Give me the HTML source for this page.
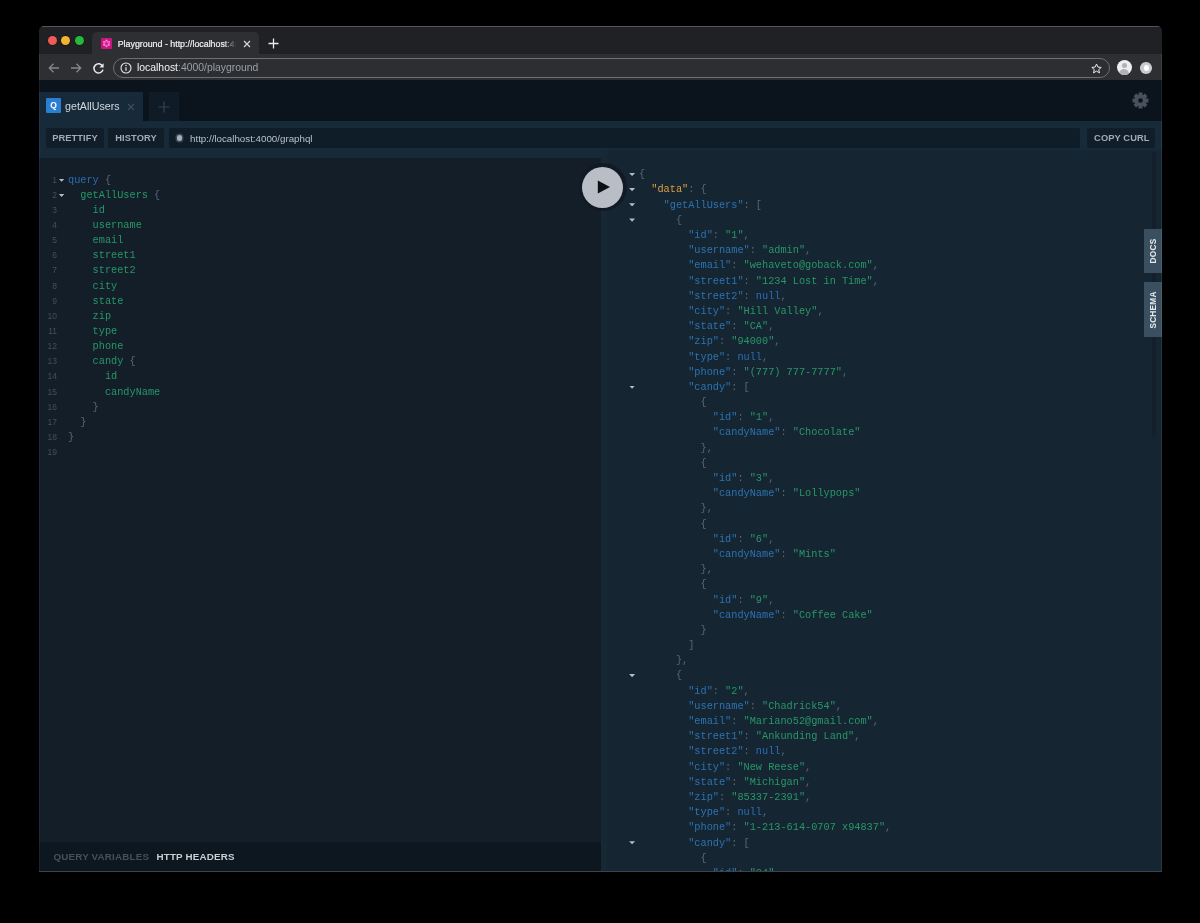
<!DOCTYPE html>
<html lang="en">
<head>
<meta charset="utf-8">
<title>Playground</title>
<style>
*{box-sizing:border-box;margin:0;padding:0}
html,body{width:1200px;height:923px;background:#000;overflow:hidden}
body{position:relative;font-family:"Liberation Sans",sans-serif;-webkit-font-smoothing:antialiased}
.abs{position:absolute}
#win{will-change:transform;position:absolute;left:39px;top:26px;width:1123px;height:846px;background:#131e29;border-radius:5px 5px 0 0;overflow:hidden}
/* chrome */
#titlebar{position:absolute;left:0;top:0;width:100%;height:29px;background:#202124;border-top:1px solid #55575a}
#ctool{position:absolute;left:0;top:28px;width:100%;height:26px;background:#2d2f33}
.tl{position:absolute;top:9.1px;width:9px;height:9px;border-radius:50%;box-shadow:0 0 0 0.8px rgba(0,0,0,.28)}
#ctab{position:absolute;left:53px;top:5px;width:167px;height:25px;background:#2d2f33;border-radius:5px 5px 0 0}
#fav{position:absolute;left:9.2px;top:6px;width:10.8px;height:10.6px;background:#c9157f;border-radius:1px}
#ctabt{position:absolute;left:25.7px;top:4.8px;width:120.3px;-webkit-text-stroke:0.2px #e8eaed;height:14px;font-size:8.85px;line-height:14px;color:#f4f5f6;white-space:nowrap;overflow:hidden}
#ctabfade{position:absolute;left:132px;top:3px;width:15px;height:18px;background:linear-gradient(90deg,rgba(45,47,51,0),#2d2f33 80%)}
#pill{position:absolute;left:74px;top:32px;width:997px;height:20px;border-radius:10px;background:#2c2e32;border:1.4px solid #6c6f73}
#urlt{position:absolute;left:98px;top:35px;font-size:10.4px;line-height:14px;color:#9aa0a6;white-space:nowrap}
#urlt b{color:#f1f3f4;font-weight:normal}
/* playground */
#pg{position:absolute;left:0;top:54px;width:100%;height:792px;background:#0b141c}
#tab1{position:absolute;left:0;top:12px;width:104px;height:29px;background:#172a3a}
#tab2{position:absolute;left:110px;top:12px;width:30px;height:29px;background:#0f1b26}
#qic{position:absolute;left:7px;top:6px;width:15px;height:15px;background:#2a7ed3;color:#fff;font-size:8.5px;line-height:15px;text-align:center;font-weight:bold;border-radius:1px}
#tabt{position:absolute;left:26px;top:6px;font-size:10.7px;line-height:16px;color:#d3d8dc;white-space:nowrap}
#bar{position:absolute;left:0;top:41px;width:100%;height:37px;background:#172a3a}
.btn{position:absolute;top:6.7px;height:20.6px;overflow:hidden;background:#111e2a;border-radius:2px;color:#a3abb3;font-weight:bold;font-size:9.3px;line-height:21.8px;text-align:center;white-space:nowrap;letter-spacing:0.1px}
#urlin{position:absolute;left:130px;top:6.7px;width:911px;height:20.6px;background:#0f1d29;border-radius:2px}
#urlin span{position:absolute;left:21px;top:0;font-size:9.75px;line-height:21.6px;color:#b9c0c6;white-space:nowrap}
#urlin i{position:absolute;left:7.8px;top:7.8px;width:5.5px;height:5.5px;border-radius:50%;background:#a9b0b7;box-shadow:0 0 0 1.5px rgba(169,176,183,.28)}
#lpane{position:absolute;left:0;top:78px;width:562px;height:714px;background:#131e29}
#rpane{position:absolute;left:562px;top:70px;width:561px;height:722px;background:#162532;border-left:6px solid #172835}
#bbar{position:absolute;left:0;top:684px;width:562px;height:30px;background:#0d1720}
#bbar span{position:absolute;top:8px;font-weight:bold;font-size:9.8px;letter-spacing:0.18px;line-height:14px;white-space:nowrap}
.ln{position:relative;height:15.15px;line-height:15.15px;font-family:"Liberation Mono",monospace;font-size:10.25px;white-space:pre}
.ln .code{position:absolute;top:0}
#lcode{position:absolute;left:0;top:14.6px;width:100%}
#lcode .code{margin-left:29px}
#lcode .num{position:absolute;left:0;top:0;width:18px;text-align:right;color:#434f5a;font-family:"Liberation Sans",sans-serif;font-size:8.5px}
#lcode .fold{position:absolute;left:19.9px;top:6.3px;width:5.4px;height:2.9px}
.fold{width:6px;height:3.2px;background:#b4bcc4;clip-path:polygon(0 0,100% 0,50% 100%);display:block}
#rcode{position:absolute;left:-6px;top:17.3px;width:100%}
#rcode .ln{height:15.19px;line-height:15.19px}
#rcode .code{margin-left:38px}
#rcode .fold{position:absolute;left:28.1px;top:5.6px}
.kw{color:#2a6db4}
.prop{color:#279767}
.p{color:#5a6672}
.key{color:#2c73b1}
.str{color:#279767}
.data{color:#dba045}
#play{position:absolute;left:539.7px;top:83.2px;width:48px;height:48px;border-radius:50%;background:#111a24}
#play i{position:absolute;left:3.5px;top:3.5px;width:41px;height:41px;border-radius:50%;background:#b9bec6}
.side{position:absolute;left:1105px;width:18px;background:#3a5060}
.side span{position:absolute;left:50%;top:50%;transform:translate(-50%,-50%) rotate(-90deg);color:#e6eaed;font-size:8.3px;font-weight:bold;white-space:nowrap;letter-spacing:0.2px}
#sbar{position:absolute;left:1113px;top:72px;width:4px;height:287px;background:linear-gradient(180deg,#13202b 0,#13202b 97.5%,rgba(19,32,43,0) 100%)}
</style>
</head>
<body>
<div id="win">
  <div id="titlebar">
    <div class="tl" style="left:8.6px;background:#ee5c54"></div>
    <div class="tl" style="left:22.3px;background:#f5b32f"></div>
    <div class="tl" style="left:35.9px;background:#27b93c"></div>
    <div id="ctab">
      <div id="fav"><svg style="display:block" width="11" height="11" viewBox="0 0 11 11"><path d="M5.5 2.4 L8.1 3.9 L8.1 7 L5.5 8.5 L2.9 7 L2.9 3.9 Z M5.5 2.4 L8.1 7 L2.9 7 Z" fill="none" stroke="#ff7fd3" stroke-width="0.7"/><g fill="#ff8dd8"><circle cx="5.5" cy="2.4" r="0.8"/><circle cx="8.1" cy="3.9" r="0.8"/><circle cx="8.1" cy="7" r="0.8"/><circle cx="5.5" cy="8.5" r="0.8"/><circle cx="2.9" cy="7" r="0.8"/><circle cx="2.9" cy="3.9" r="0.8"/></g></svg></div>
      <div id="ctabt">Playground - http://localhost:4000/playground</div>
      <div id="ctabfade"></div>
      <svg class="abs" style="left:151px;top:8px" width="8" height="8" viewBox="0 0 8 8"><path d="M1 1 L7 7 M7 1 L1 7" stroke="#d5d7da" stroke-width="1.2"/></svg>
    </div>
    <svg class="abs" style="left:229px;top:11px" width="11" height="11" viewBox="0 0 11 11"><path d="M5.5 0.5 V10.5 M0.5 5.5 H10.5" stroke="#e8eaed" stroke-width="1.3"/></svg>
  </div>
  <div id="ctool"></div>
  <svg class="abs" style="left:9px;top:36px" width="12" height="12" viewBox="0 0 12 12"><path d="M11 6 H1.5 M5.5 1.8 L1.3 6 L5.5 10.2" fill="none" stroke="#84888d" stroke-width="1.3"/></svg>
  <svg class="abs" style="left:31px;top:36px" width="12" height="12" viewBox="0 0 12 12"><path d="M1 6 H10.5 M6.5 1.8 L10.7 6 L6.5 10.2" fill="none" stroke="#84888d" stroke-width="1.3"/></svg>
  <svg class="abs" style="left:53px;top:35.5px" width="13" height="13" viewBox="0 0 13 13"><path d="M10.6 4.2 A4.6 4.6 0 1 0 11 7.6" fill="none" stroke="#e8eaed" stroke-width="1.5"/><path d="M11.6 1.2 V5.4 H7.4 Z" fill="#e8eaed"/></svg>
  <div id="pill"></div>
  <svg class="abs" style="left:80.5px;top:36px" width="12" height="12" viewBox="0 0 12 12"><circle cx="6" cy="6" r="5" fill="none" stroke="#e8eaed" stroke-width="1.1"/><path d="M6 5.2 V8.8" stroke="#e8eaed" stroke-width="1.2"/><circle cx="6" cy="3.5" r="0.75" fill="#e8eaed"/></svg>
  <div id="urlt"><b>localhost</b>:4000/playground</div>
  <svg class="abs" style="left:1052px;top:36.5px" width="11" height="11" viewBox="0 0 11 11"><path d="M5.5 1 L6.9 4.1 L10.2 4.4 L7.7 6.6 L8.5 9.9 L5.5 8.1 L2.5 9.9 L3.3 6.6 L0.8 4.4 L4.1 4.1 Z" fill="none" stroke="#e8eaed" stroke-width="1"/></svg>
  <div class="abs" style="left:1077.6px;top:34.2px;width:15px;height:15px;border-radius:50%;background:#eceef0;overflow:hidden"><div class="abs" style="left:5px;top:2.5px;width:5px;height:5px;border-radius:50%;background:#aeb2b7"></div><div class="abs" style="left:2.5px;top:8.5px;width:10px;height:8px;border-radius:5px 5px 0 0;background:#aeb2b7"></div></div>
  <div class="abs" style="left:1101px;top:36px;width:11.6px;height:11.6px;border-radius:50%;background:#c9cccf"><div class="abs" style="left:3.5px;top:3px;width:5px;height:6px;border-radius:50% 50% 40% 40%;background:#fff"></div></div>

  <div id="pg">
    <div id="tab1"><div id="qic">Q</div><div id="tabt">getAllUsers</div>
      <svg class="abs" style="left:88px;top:10.5px" width="8" height="8" viewBox="0 0 8 8"><path d="M1 1 L7 7 M7 1 L1 7" stroke="#3f4f5d" stroke-width="1.1"/></svg>
    </div>
    <div id="tab2"><svg class="abs" style="left:9px;top:8.5px" width="12" height="12" viewBox="0 0 12 12"><path d="M6 0.5 V11.5 M0.5 6 H11.5" stroke="#36434f" stroke-width="1.2"/></svg></div>
    <svg class="abs" style="left:1092.5px;top:12px" width="17" height="17" viewBox="-8.5 -8.5 17 17"><g fill="#48525f"><circle r="6"/><g id="t"><rect x="-2" y="-8" width="4" height="16" rx="0.5"/></g><use href="#t" transform="rotate(45)"/><use href="#t" transform="rotate(90)"/><use href="#t" transform="rotate(135)"/></g><circle r="2.3" fill="#0b141c"/></svg>
    <div id="bar">
      <div class="btn" style="left:7px;width:58px">PRETTIFY</div>
      <div class="btn" style="left:69px;width:56px">HISTORY</div>
      <div id="urlin"><i></i><span>http://localhost:4000/graphql</span></div>
      <div class="btn" style="left:1048px;width:67.5px;padding-left:2.2px">COPY CURL</div>
    </div>
    <div id="lpane">
      <div id="lcode">
<div class="ln"><span class="num">1</span><i class="fold"></i><span class="code" style="left:0.00px"><span class="kw">query</span><span class="p"> {</span></span></div>
<div class="ln"><span class="num">2</span><i class="fold"></i><span class="code" style="left:12.30px"><span class="prop">getAllUsers</span><span class="p"> {</span></span></div>
<div class="ln"><span class="num">3</span><span class="code" style="left:24.60px"><span class="prop">id</span></span></div>
<div class="ln"><span class="num">4</span><span class="code" style="left:24.60px"><span class="prop">username</span></span></div>
<div class="ln"><span class="num">5</span><span class="code" style="left:24.60px"><span class="prop">email</span></span></div>
<div class="ln"><span class="num">6</span><span class="code" style="left:24.60px"><span class="prop">street1</span></span></div>
<div class="ln"><span class="num">7</span><span class="code" style="left:24.60px"><span class="prop">street2</span></span></div>
<div class="ln"><span class="num">8</span><span class="code" style="left:24.60px"><span class="prop">city</span></span></div>
<div class="ln"><span class="num">9</span><span class="code" style="left:24.60px"><span class="prop">state</span></span></div>
<div class="ln"><span class="num">10</span><span class="code" style="left:24.60px"><span class="prop">zip</span></span></div>
<div class="ln"><span class="num">11</span><span class="code" style="left:24.60px"><span class="prop">type</span></span></div>
<div class="ln"><span class="num">12</span><span class="code" style="left:24.60px"><span class="prop">phone</span></span></div>
<div class="ln"><span class="num">13</span><span class="code" style="left:24.60px"><span class="prop">candy</span><span class="p"> {</span></span></div>
<div class="ln"><span class="num">14</span><span class="code" style="left:36.90px"><span class="prop">id</span></span></div>
<div class="ln"><span class="num">15</span><span class="code" style="left:36.90px"><span class="prop">candyName</span></span></div>
<div class="ln"><span class="num">16</span><span class="code" style="left:24.60px"><span class="p">}</span></span></div>
<div class="ln"><span class="num">17</span><span class="code" style="left:12.30px"><span class="p">}</span></span></div>
<div class="ln"><span class="num">18</span><span class="code" style="left:0.00px"><span class="p">}</span></span></div>
<div class="ln"><span class="num">19</span><span class="code" style="left:0.00px"></span></div>

      </div>
      <div id="bbar"><span style="left:14.5px;color:#46505b">QUERY VARIABLES</span><span style="left:117.5px;color:#c9cfd4">HTTP HEADERS</span></div>
    </div>
    <div id="rpane">
      <div id="rcode">
<div class="ln"><i class="fold"></i><span class="code" style="left:0.00px"><span class="p">{</span></span></div>
<div class="ln"><i class="fold"></i><span class="code" style="left:12.30px"><span class="data">&quot;data&quot;</span><span class="p">: {</span></span></div>
<div class="ln"><i class="fold"></i><span class="code" style="left:24.60px"><span class="key">&quot;getAllUsers&quot;</span><span class="p">: [</span></span></div>
<div class="ln"><i class="fold"></i><span class="code" style="left:36.90px"><span class="p">{</span></span></div>
<div class="ln"><span class="code" style="left:49.20px"><span class="key">&quot;id&quot;</span><span class="p">: </span><span class="str">&quot;1&quot;</span><span class="p">,</span></span></div>
<div class="ln"><span class="code" style="left:49.20px"><span class="key">&quot;username&quot;</span><span class="p">: </span><span class="str">&quot;admin&quot;</span><span class="p">,</span></span></div>
<div class="ln"><span class="code" style="left:49.20px"><span class="key">&quot;email&quot;</span><span class="p">: </span><span class="str">&quot;wehaveto@goback.com&quot;</span><span class="p">,</span></span></div>
<div class="ln"><span class="code" style="left:49.20px"><span class="key">&quot;street1&quot;</span><span class="p">: </span><span class="str">&quot;1234 Lost in Time&quot;</span><span class="p">,</span></span></div>
<div class="ln"><span class="code" style="left:49.20px"><span class="key">&quot;street2&quot;</span><span class="p">: </span><span class="kw">null</span><span class="p">,</span></span></div>
<div class="ln"><span class="code" style="left:49.20px"><span class="key">&quot;city&quot;</span><span class="p">: </span><span class="str">&quot;Hill Valley&quot;</span><span class="p">,</span></span></div>
<div class="ln"><span class="code" style="left:49.20px"><span class="key">&quot;state&quot;</span><span class="p">: </span><span class="str">&quot;CA&quot;</span><span class="p">,</span></span></div>
<div class="ln"><span class="code" style="left:49.20px"><span class="key">&quot;zip&quot;</span><span class="p">: </span><span class="str">&quot;94000&quot;</span><span class="p">,</span></span></div>
<div class="ln"><span class="code" style="left:49.20px"><span class="key">&quot;type&quot;</span><span class="p">: </span><span class="kw">null</span><span class="p">,</span></span></div>
<div class="ln"><span class="code" style="left:49.20px"><span class="key">&quot;phone&quot;</span><span class="p">: </span><span class="str">&quot;(777) 777-7777&quot;</span><span class="p">,</span></span></div>
<div class="ln"><i class="fold"></i><span class="code" style="left:49.20px"><span class="key">&quot;candy&quot;</span><span class="p">: [</span></span></div>
<div class="ln"><span class="code" style="left:61.50px"><span class="p">{</span></span></div>
<div class="ln"><span class="code" style="left:73.80px"><span class="key">&quot;id&quot;</span><span class="p">: </span><span class="str">&quot;1&quot;</span><span class="p">,</span></span></div>
<div class="ln"><span class="code" style="left:73.80px"><span class="key">&quot;candyName&quot;</span><span class="p">: </span><span class="str">&quot;Chocolate&quot;</span></span></div>
<div class="ln"><span class="code" style="left:61.50px"><span class="p">},</span></span></div>
<div class="ln"><span class="code" style="left:61.50px"><span class="p">{</span></span></div>
<div class="ln"><span class="code" style="left:73.80px"><span class="key">&quot;id&quot;</span><span class="p">: </span><span class="str">&quot;3&quot;</span><span class="p">,</span></span></div>
<div class="ln"><span class="code" style="left:73.80px"><span class="key">&quot;candyName&quot;</span><span class="p">: </span><span class="str">&quot;Lollypops&quot;</span></span></div>
<div class="ln"><span class="code" style="left:61.50px"><span class="p">},</span></span></div>
<div class="ln"><span class="code" style="left:61.50px"><span class="p">{</span></span></div>
<div class="ln"><span class="code" style="left:73.80px"><span class="key">&quot;id&quot;</span><span class="p">: </span><span class="str">&quot;6&quot;</span><span class="p">,</span></span></div>
<div class="ln"><span class="code" style="left:73.80px"><span class="key">&quot;candyName&quot;</span><span class="p">: </span><span class="str">&quot;Mints&quot;</span></span></div>
<div class="ln"><span class="code" style="left:61.50px"><span class="p">},</span></span></div>
<div class="ln"><span class="code" style="left:61.50px"><span class="p">{</span></span></div>
<div class="ln"><span class="code" style="left:73.80px"><span class="key">&quot;id&quot;</span><span class="p">: </span><span class="str">&quot;9&quot;</span><span class="p">,</span></span></div>
<div class="ln"><span class="code" style="left:73.80px"><span class="key">&quot;candyName&quot;</span><span class="p">: </span><span class="str">&quot;Coffee Cake&quot;</span></span></div>
<div class="ln"><span class="code" style="left:61.50px"><span class="p">}</span></span></div>
<div class="ln"><span class="code" style="left:49.20px"><span class="p">]</span></span></div>
<div class="ln"><span class="code" style="left:36.90px"><span class="p">},</span></span></div>
<div class="ln"><i class="fold"></i><span class="code" style="left:36.90px"><span class="p">{</span></span></div>
<div class="ln"><span class="code" style="left:49.20px"><span class="key">&quot;id&quot;</span><span class="p">: </span><span class="str">&quot;2&quot;</span><span class="p">,</span></span></div>
<div class="ln"><span class="code" style="left:49.20px"><span class="key">&quot;username&quot;</span><span class="p">: </span><span class="str">&quot;Chadrick54&quot;</span><span class="p">,</span></span></div>
<div class="ln"><span class="code" style="left:49.20px"><span class="key">&quot;email&quot;</span><span class="p">: </span><span class="str">&quot;Mariano52@gmail.com&quot;</span><span class="p">,</span></span></div>
<div class="ln"><span class="code" style="left:49.20px"><span class="key">&quot;street1&quot;</span><span class="p">: </span><span class="str">&quot;Ankunding Land&quot;</span><span class="p">,</span></span></div>
<div class="ln"><span class="code" style="left:49.20px"><span class="key">&quot;street2&quot;</span><span class="p">: </span><span class="kw">null</span><span class="p">,</span></span></div>
<div class="ln"><span class="code" style="left:49.20px"><span class="key">&quot;city&quot;</span><span class="p">: </span><span class="str">&quot;New Reese&quot;</span><span class="p">,</span></span></div>
<div class="ln"><span class="code" style="left:49.20px"><span class="key">&quot;state&quot;</span><span class="p">: </span><span class="str">&quot;Michigan&quot;</span><span class="p">,</span></span></div>
<div class="ln"><span class="code" style="left:49.20px"><span class="key">&quot;zip&quot;</span><span class="p">: </span><span class="str">&quot;85337-2391&quot;</span><span class="p">,</span></span></div>
<div class="ln"><span class="code" style="left:49.20px"><span class="key">&quot;type&quot;</span><span class="p">: </span><span class="kw">null</span><span class="p">,</span></span></div>
<div class="ln"><span class="code" style="left:49.20px"><span class="key">&quot;phone&quot;</span><span class="p">: </span><span class="str">&quot;1-213-614-0707 x94837&quot;</span><span class="p">,</span></span></div>
<div class="ln"><i class="fold"></i><span class="code" style="left:49.20px"><span class="key">&quot;candy&quot;</span><span class="p">: [</span></span></div>
<div class="ln"><span class="code" style="left:61.50px"><span class="p">{</span></span></div>
<div class="ln"><span class="code" style="left:73.80px"><span class="key">&quot;id&quot;</span><span class="p">: </span><span class="str">&quot;84&quot;</span><span class="p">,</span></span></div>

      </div>
    </div>
    <div id="sbar"></div>
    <div id="play"><i></i><svg class="abs" style="left:17px;top:16px" width="16" height="16" viewBox="0 0 16 16"><path d="M1.8 1.6 L14 8 L1.8 14.4 Z" fill="#0c0f13"/></svg></div>
    <div class="side" style="top:149px;height:44px"><span>DOCS</span></div>
    <div class="side" style="top:202px;height:55px"><span>SCHEMA</span></div>
  </div>
  <div class="abs" style="left:0;top:28px;width:100%;height:818px;box-shadow:inset 1px 0 0 rgba(255,255,255,.06),inset -1px 0 0 rgba(255,255,255,.08)"></div>
  <div class="abs" style="left:0;top:845px;width:100%;height:1px;background:#3b444c"></div>
</div>
</body>
</html>
